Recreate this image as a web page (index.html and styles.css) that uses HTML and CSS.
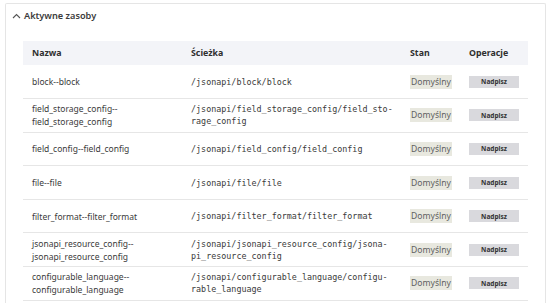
FILE: index.html
```html
<!DOCTYPE html>
<html lang="pl">

<head>
    <meta charset="UTF-8">
    <meta name="viewport" content="width=device-width, initial-scale=1.0">
    <title>Zasoby</title>
    <link rel="stylesheet" href="styles.css">
</head>

<body>
    <div class="card">
        <div class="summary">
            <svg class="chev" width="9" height="6" viewBox="0 0 9 6"><path d="M1 5 L4.5 1.5 L8 5" fill="none" stroke="#555" stroke-width="1.1"/></svg>
            <span>Aktywne zasoby</span>
        </div>
        <table class="res">
            <colgroup>
                <col class="c-name">
                <col class="c-path">
                <col class="c-state">
                <col class="c-ops">
            </colgroup>
            <thead>
                <tr>
                    <th>Nazwa</th>
                    <th>Ścieżka</th>
                    <th>Stan</th>
                    <th>Operacje</th>
                </tr>
            </thead>
            <tbody>
                <tr>
                    <td>block--block</td>
                    <td class="path">/jsonapi/block/block</td>
                    <td><span class="badge">Domyślny</span></td>
                    <td><button class="btn">Nadpisz</button></td>
                </tr>
                <tr>
                    <td>field_storage_config--<br>field_storage_config</td>
                    <td class="path">/jsonapi/field_storage_config/field_sto&shy;rage_config</td>
                    <td><span class="badge">Domyślny</span></td>
                    <td><button class="btn">Nadpisz</button></td>
                </tr>
                <tr>
                    <td>field_config--field_config</td>
                    <td class="path">/jsonapi/field_config/field_config</td>
                    <td><span class="badge">Domyślny</span></td>
                    <td><button class="btn">Nadpisz</button></td>
                </tr>
                <tr>
                    <td>file--file</td>
                    <td class="path">/jsonapi/file/file</td>
                    <td><span class="badge">Domyślny</span></td>
                    <td><button class="btn">Nadpisz</button></td>
                </tr>
                <tr>
                    <td>filter_format--filter_format</td>
                    <td class="path">/jsonapi/filter_format/filter_format</td>
                    <td><span class="badge">Domyślny</span></td>
                    <td><button class="btn">Nadpisz</button></td>
                </tr>
                <tr>
                    <td>jsonapi_resource_config--<br>jsonapi_resource_config</td>
                    <td class="path">/jsonapi/jsonapi_resource_config/jsona&shy;pi_resource_config</td>
                    <td><span class="badge">Domyślny</span></td>
                    <td><button class="btn">Nadpisz</button></td>
                </tr>
                <tr>
                    <td>configurable_language--<br>configurable_language</td>
                    <td class="path">/jsonapi/configurable_language/configu&shy;rable_language</td>
                    <td><span class="badge">Domyślny</span></td>
                    <td><button class="btn">Nadpisz</button></td>
                </tr>
            </tbody>
        </table>
    </div>
</body>

</html>
```

FILE: styles.css
```css
*{
    margin: 0;
    padding: 0;
    box-sizing: border-box;
}
body{
    font-family: "Noto Sans", "Open Sans", sans-serif;
    color: #333;
    padding: 3px 5px 0 5px;
    background: #fff;
}
.card{
    border: 1px solid #e5e5e5;
    border-bottom: none;
    border-radius: 2px 2px 0 0;
    padding: 0 17px 20px 17px;
    height: 310px;
}
.summary{
    display: flex;
    align-items: center;
    gap: 3px;
    height: 23px;
    margin-left: -11px;
    font-size: 9.2px;
    font-weight: 600;
    color: #3b3b3b;
}
.chev{
    margin-top: 1px;
}
.res{
    margin-top: 14px;
    width: 100%;
    border-collapse: collapse;
    table-layout: fixed;
    font-size: 8.5px;
}
.c-name{ width: 159px; }
.c-path{ width: 219px; }
.c-state{ width: 59px; }
.c-ops{ width: 68px; }
.res th{
    background: #f3f4f8;
    height: 24px;
    text-align: left;
    font-weight: 700;
    font-size: 8.8px;
    padding: 0 6px 0 9px;
    color: #2f2f2f;
}
.res td{
    height: 33.6px;
    padding: 0 6px 0 9px;
    border-bottom: 1px solid #e6e6e6;
    line-height: 13px;
    vertical-align: middle;
    color: #3a3a3a;
}
.res td.path{
    font-family: "DejaVu Sans Mono", monospace;
    font-size: 8.4px;
    line-height: 12px;
    padding-right: 4px;
}
.badge{
    display: inline-block;
    background: #e8e8df;
    color: #5f5f5f;
    padding: 1px 1px;
    font-size: 8.6px;
    line-height: 12px;
}
.btn{
    display: block;
    width: 50px;
    height: 12px;
    border: none;
    background: #d9d9dd;
    color: #333;
    font-family: "Noto Sans", sans-serif;
    font-weight: 700;
    font-size: 6.5px;
}
```
